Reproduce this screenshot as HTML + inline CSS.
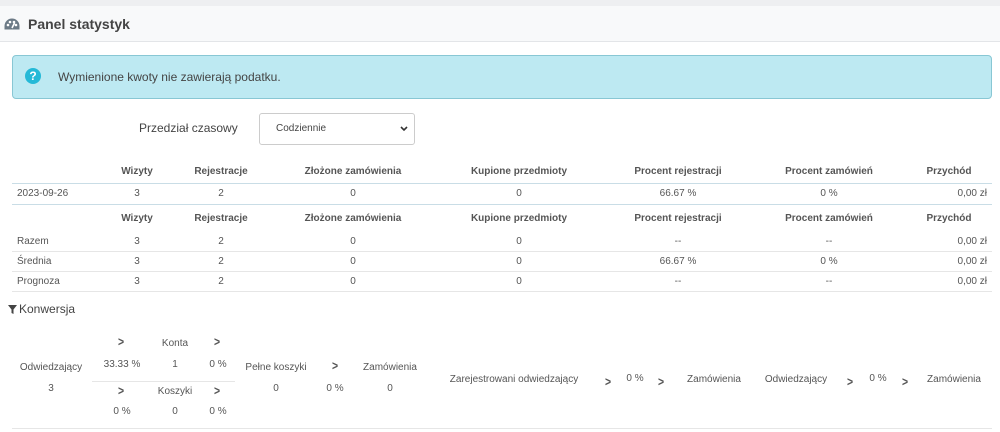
<!DOCTYPE html>
<html><head><meta charset="utf-8"><style>
*{margin:0;padding:0;box-sizing:border-box}
body{width:1000px;height:432px;background:#fff;font-family:"Liberation Sans","DejaVu Sans",sans-serif;color:#555;position:relative;overflow:hidden;font-size:10px}
.a{position:absolute;white-space:nowrap}
.c{position:absolute;white-space:nowrap;transform:translateX(-50%)}
.r{position:absolute;white-space:nowrap;transform:translateX(-100%)}
.h{font-weight:bold;color:#555}
.ln{position:absolute;left:12px;width:980px;height:1px;background:#e6e6e6}
.ch{position:absolute;font-weight:bold;color:#555;font-size:13px;transform:translateX(-50%) scaleX(0.8)}
</style></head><body>
<div class="a" style="left:0;top:0;width:1000px;height:6px;background:#eeeff1"></div>
<div class="a" style="left:0;top:6px;width:1000px;height:36px;background:#f8f9fa;border-bottom:1px solid #e3e5e8"></div>
<svg class="a" style="left:4px;top:18px" width="16" height="13" viewBox="0 0 16 13"><path d="M8 0.5A7.5 7.5 0 0 0 0.5 8v3.5h15V8A7.5 7.5 0 0 0 8 0.5z" fill="#6c7a86"/><circle cx="4" cy="7" r="1.3" fill="#fff"/><circle cx="6" cy="4" r="1.3" fill="#fff"/><circle cx="10" cy="4" r="1.3" fill="#fff"/><circle cx="12" cy="7" r="1.3" fill="#fff"/><path d="M8 10L10.5 5" stroke="#fff" stroke-width="1.6"/></svg>
<div class="a" style="left:28px;top:16px;font-size:14px;font-weight:bold;color:#444">Panel statystyk</div>
<div class="a" style="left:12px;top:55px;width:980px;height:44px;background:#bde9f2;border:1px solid #88c7d4;border-radius:4px"></div>
<div class="a" style="left:25px;top:68px;width:16px;height:16px;border-radius:50%;background:#25b9d7;color:#fff;font-weight:bold;font-size:12px;text-align:center;line-height:16px">?</div>
<div class="a" style="left:58px;top:70px;font-size:12px;color:#444">Wymienione kwoty nie zawierają podatku.</div>
<div class="a" style="left:139px;top:121px;font-size:12px;color:#444">Przedział czasowy</div>
<div class="a" style="left:259px;top:113px;width:156px;height:32px;border:1px solid #ccc;border-radius:3px;background:#fff"></div>
<div class="a" style="left:276px;top:123px;font-size:10px;color:#444">Codziennie</div>
<svg class="a" style="left:400px;top:126px" width="8" height="6" viewBox="0 0 8 6"><path d="M1 1l3 3 3-3" stroke="#333" stroke-width="1.6" fill="none"/></svg>

<div class="h">
<span class="c" style="left:137px;top:166px">Wizyty</span>
<span class="c" style="left:221px;top:166px">Rejestracje</span>
<span class="c" style="left:353px;top:166px">Złożone zamówienia</span>
<span class="c" style="left:519px;top:166px">Kupione przedmioty</span>
<span class="c" style="left:678px;top:166px">Procent rejestracji</span>
<span class="c" style="left:829px;top:166px">Procent zamówień</span>
<span class="c" style="left:949px;top:166px">Przychód</span>
</div>
<div class="ln" style="top:183px;background:#c9dde6"></div>
<span class="a" style="left:17px;top:188px">2023-09-26</span>
<span class="c" style="left:137px;top:188px">3</span><span class="c" style="left:221px;top:188px">2</span><span class="c" style="left:353px;top:188px">0</span><span class="c" style="left:519px;top:188px">0</span><span class="c" style="left:678px;top:188px">66.67 %</span><span class="c" style="left:829px;top:188px">0 %</span><span class="r" style="left:987px;top:188px">0,00 zł</span>
<div class="ln" style="top:204px;background:#c9dde6"></div>
<div class="h">
<span class="c" style="left:137px;top:213px">Wizyty</span>
<span class="c" style="left:221px;top:213px">Rejestracje</span>
<span class="c" style="left:353px;top:213px">Złożone zamówienia</span>
<span class="c" style="left:519px;top:213px">Kupione przedmioty</span>
<span class="c" style="left:678px;top:213px">Procent rejestracji</span>
<span class="c" style="left:829px;top:213px">Procent zamówień</span>
<span class="c" style="left:949px;top:213px">Przychód</span>
</div>
<span class="a" style="left:17px;top:236px">Razem</span>
<span class="c" style="left:137px;top:236px">3</span><span class="c" style="left:221px;top:236px">2</span><span class="c" style="left:353px;top:236px">0</span><span class="c" style="left:519px;top:236px">0</span><span class="c" style="left:678px;top:236px">--</span><span class="c" style="left:829px;top:236px">--</span><span class="r" style="left:987px;top:236px">0,00 zł</span>
<div class="ln" style="top:251px"></div>
<span class="a" style="left:17px;top:256px">Średnia</span>
<span class="c" style="left:137px;top:256px">3</span><span class="c" style="left:221px;top:256px">2</span><span class="c" style="left:353px;top:256px">0</span><span class="c" style="left:519px;top:256px">0</span><span class="c" style="left:678px;top:256px">66.67 %</span><span class="c" style="left:829px;top:256px">0 %</span><span class="r" style="left:987px;top:256px">0,00 zł</span>
<div class="ln" style="top:271px"></div>
<span class="a" style="left:17px;top:276px">Prognoza</span>
<span class="c" style="left:137px;top:276px">3</span><span class="c" style="left:221px;top:276px">2</span><span class="c" style="left:353px;top:276px">0</span><span class="c" style="left:519px;top:276px">0</span><span class="c" style="left:678px;top:276px">--</span><span class="c" style="left:829px;top:276px">--</span><span class="r" style="left:987px;top:276px">0,00 zł</span>
<div class="ln" style="top:291px"></div>

<svg class="a" style="left:8px;top:305px" width="9" height="9" viewBox="0 0 9 9"><path d="M0 0h9L5.5 4.5V9L3.5 8V4.5z" fill="#444"/></svg>
<div class="a" style="left:19px;top:302px;font-size:12px;color:#444">Konwersja</div>

<span class="ch" style="left:121px;top:334px">&gt;</span>
<span class="c" style="left:175px;top:338px">Konta</span>
<span class="ch" style="left:217px;top:334px">&gt;</span>
<span class="c" style="left:51px;top:362px">Odwiedzający</span>
<span class="c" style="left:122px;top:359px">33.33 %</span>
<span class="c" style="left:175px;top:359px">1</span>
<span class="c" style="left:218px;top:359px">0 %</span>
<div class="a" style="left:92px;top:381px;width:143px;height:1px;background:#e6e6e6"></div>
<span class="c" style="left:51px;top:383px">3</span>
<span class="ch" style="left:121px;top:383px">&gt;</span>
<span class="c" style="left:175px;top:386px">Koszyki</span>
<span class="ch" style="left:217px;top:383px">&gt;</span>
<span class="c" style="left:122px;top:406px">0 %</span>
<span class="c" style="left:175px;top:406px">0</span>
<span class="c" style="left:218px;top:406px">0 %</span>
<span class="c" style="left:276px;top:362px">Pełne koszyki</span>
<span class="ch" style="left:335px;top:358px">&gt;</span>
<span class="c" style="left:390px;top:362px">Zamówienia</span>
<span class="c" style="left:276px;top:383px">0</span>
<span class="c" style="left:335px;top:383px">0 %</span>
<span class="c" style="left:390px;top:383px">0</span>
<span class="c" style="left:514px;top:374px">Zarejestrowani odwiedzający</span>
<span class="ch" style="left:608px;top:374px">&gt;</span>
<span class="c" style="left:635px;top:373px">0 %</span>
<span class="ch" style="left:661px;top:374px">&gt;</span>
<span class="c" style="left:714px;top:374px">Zamówienia</span>
<span class="c" style="left:796px;top:374px">Odwiedzający</span>
<span class="ch" style="left:850px;top:374px">&gt;</span>
<span class="c" style="left:878px;top:373px">0 %</span>
<span class="ch" style="left:905px;top:374px">&gt;</span>
<span class="c" style="left:954px;top:374px">Zamówienia</span>
<div class="ln" style="top:428px"></div>
</body></html>
